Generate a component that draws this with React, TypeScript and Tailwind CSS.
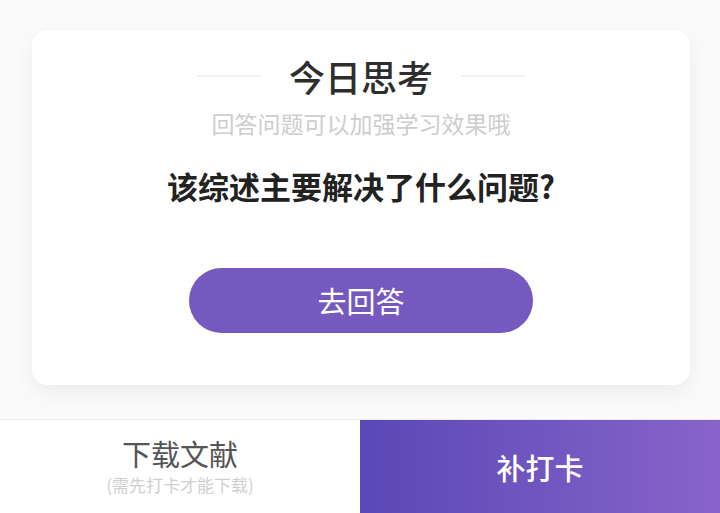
export default function App() {
  return (
    <div
      className="w-[720px] h-[513px] bg-[#fafafa] flex flex-col overflow-hidden"
      style={{ fontFamily: '"Noto Sans CJK SC", "Noto Sans", sans-serif' }}
    >
      {/* Card */}
      <div className="pt-[30px] pl-[32px] pr-[30px]">
        <ThinkCard />
      </div>

      {/* Bottom bar */}
      <div className="mt-auto h-[94px] flex border-t border-[#ececec]">
        <button className="w-1/2 bg-white flex flex-col items-center justify-center pb-[2px]">
          <span className="text-[29px] leading-[34px] text-[#555]">下载文献</span>
          <span className="mt-[5px] text-[17px] leading-[20px] text-[#cfcfcf]">(需先打卡才能下载)</span>
        </button>
        <button className="w-1/2 bg-gradient-to-r from-[#5a48b6] to-[#8863ca] flex items-center justify-center">
          <span className="text-[29px] leading-[36px] text-white font-medium">补打卡</span>
        </button>
      </div>
    </div>
  )
}

function ThinkCard() {
  return (
    <div className="bg-white rounded-2xl shadow-[0_8px_22px_rgba(0,0,0,0.06)] pt-[24px] pb-[52px] flex flex-col items-center">
      <div className="flex items-center gap-[28px]">
        <span className="w-[64px] h-[2px] bg-[#f0f0f0]" />
        <h2 className="text-[36px] leading-[44px] font-medium text-[#2e2e2e]">今日思考</h2>
        <span className="w-[64px] h-[2px] bg-[#f0f0f0]" />
      </div>
      <p className="mt-[9px] text-[23px] leading-[32px] text-[#cdcdcd]">回答问题可以加强学习效果哦</p>
      <p className="mt-[27px] text-[31px] leading-[40px] font-bold text-[#222]">该综述主要解决了什么问题?</p>
      <button className="mt-[62px] w-[344px] h-[65px] rounded-full bg-[#7659bf] text-white text-[29px]">
        去回答
      </button>
    </div>
  )
}
